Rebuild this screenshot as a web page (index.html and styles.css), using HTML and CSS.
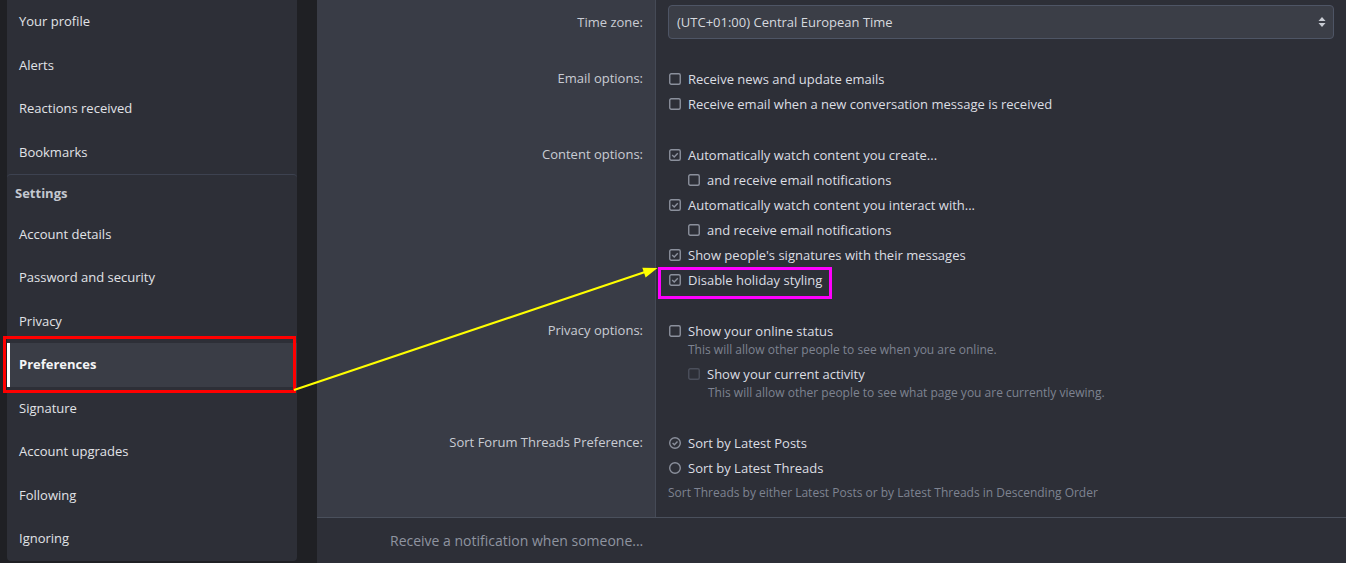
FILE: index.html
```html
<!DOCTYPE html>
<html lang="en">
<head>
<meta charset="utf-8">
<title>Preferences</title>
<link rel="stylesheet" href="styles.css">
</head>
<body>
<div class="page">
  <nav class="sidebar">
    <div class="block">
      <a class="nav-item">Your profile</a>
      <a class="nav-item">Alerts</a>
      <a class="nav-item">Reactions received</a>
      <a class="nav-item">Bookmarks</a>
    </div>
    <div class="block block-sep">
      <div class="block-header">Settings</div>
      <a class="nav-item">Account details</a>
      <a class="nav-item">Password and security</a>
      <a class="nav-item">Privacy</a>
      <a class="nav-item is-active">Preferences</a>
      <a class="nav-item">Signature</a>
      <a class="nav-item">Account upgrades</a>
      <a class="nav-item">Following</a>
      <a class="nav-item">Ignoring</a>
    </div>
  </nav>

  <main class="main">
    <div class="form">
      <div class="row row-first">
        <div class="label">Time zone:</div>
        <div class="control">
          <div class="select">
            <span>(UTC+01:00) Central European Time</span>
            <svg class="select-arrow" width="8" height="12" viewBox="0 0 8 12"><path d="M4 1 L7.5 5 H0.5 Z M4 11 L7.5 7 H0.5 Z" fill="#c9ccd4"/></svg>
          </div>
        </div>
      </div>

      <div class="row">
        <div class="label"><span class="label-text">Email options:</span></div>
        <div class="control">
          <div class="opt"><svg class="cb" width="12" height="12" viewBox="0 0 12 12"><rect x="0.75" y="0.75" width="10.5" height="10.5" rx="1.5"/></svg>Receive news and update emails</div>
          <div class="opt"><svg class="cb" width="12" height="12" viewBox="0 0 12 12"><rect x="0.75" y="0.75" width="10.5" height="10.5" rx="1.5"/></svg>Receive email when a new conversation message is received</div>
        </div>
      </div>

      <div class="row">
        <div class="label"><span class="label-text">Content options:</span></div>
        <div class="control">
          <div class="opt"><svg class="cb" width="12" height="12" viewBox="0 0 12 12"><rect x="0.75" y="0.75" width="10.5" height="10.5" rx="1.5"/><path d="M3.2 6.1 L5.2 8 L8.8 4.2"/></svg>Automatically watch content you create...</div>
          <div class="opt opt-sub"><svg class="cb" width="12" height="12" viewBox="0 0 12 12"><rect x="0.75" y="0.75" width="10.5" height="10.5" rx="1.5"/></svg>and receive email notifications</div>
          <div class="opt"><svg class="cb" width="12" height="12" viewBox="0 0 12 12"><rect x="0.75" y="0.75" width="10.5" height="10.5" rx="1.5"/><path d="M3.2 6.1 L5.2 8 L8.8 4.2"/></svg>Automatically watch content you interact with...</div>
          <div class="opt opt-sub"><svg class="cb" width="12" height="12" viewBox="0 0 12 12"><rect x="0.75" y="0.75" width="10.5" height="10.5" rx="1.5"/></svg>and receive email notifications</div>
          <div class="opt"><svg class="cb" width="12" height="12" viewBox="0 0 12 12"><rect x="0.75" y="0.75" width="10.5" height="10.5" rx="1.5"/><path d="M3.2 6.1 L5.2 8 L8.8 4.2"/></svg>Show people's signatures with their messages</div>
          <div class="opt"><svg class="cb" width="12" height="12" viewBox="0 0 12 12"><rect x="0.75" y="0.75" width="10.5" height="10.5" rx="1.5"/><path d="M3.2 6.1 L5.2 8 L8.8 4.2"/></svg>Disable holiday styling</div>
        </div>
      </div>

      <div class="row">
        <div class="label"><span class="label-text">Privacy options:</span></div>
        <div class="control">
          <div class="opt"><svg class="cb" width="12" height="12" viewBox="0 0 12 12"><rect x="0.75" y="0.75" width="10.5" height="10.5" rx="1.5"/></svg>Show your online status</div>
          <div class="hint">This will allow other people to see when you are online.</div>
          <div class="opt opt-sub"><svg class="cb cb-disabled" width="12" height="12" viewBox="0 0 12 12"><rect x="0.75" y="0.75" width="10.5" height="10.5" rx="1.5"/></svg>Show your current activity</div>
          <div class="hint hint-sub">This will allow other people to see what page you are currently viewing.</div>
        </div>
      </div>

      <div class="row row-sort">
        <div class="label"><span class="label-text">Sort Forum Threads Preference:</span></div>
        <div class="control">
          <div class="opt"><svg class="cb" width="12" height="12" viewBox="0 0 12 12"><circle cx="6" cy="6" r="5.3"/><path d="M3.6 6.1 L5.4 7.8 L8.5 4.5"/></svg>Sort by Latest Posts</div>
          <div class="opt"><svg class="cb" width="12" height="12" viewBox="0 0 12 12"><circle cx="6" cy="6" r="5.3"/></svg>Sort by Latest Threads</div>
          <div class="hint hint-sort">Sort Threads by either Latest Posts or by Latest Threads in Descending Order</div>
        </div>
      </div>
    </div>
    <div class="section-head">Receive a notification when someone...</div>
  </main>
</div>

<div class="mark mark-red"></div>
<div class="mark mark-magenta"></div>
<svg class="arrow" width="1346" height="563" viewBox="0 0 1346 563">
  <line x1="294" y1="390" x2="645" y2="272" stroke="#ffff00" stroke-width="2.2"/>
  <polygon points="657.5,268 645.6,277.6 642.3,267.8" fill="#ffff00"/>
</svg>
</body>
</html>
```

FILE: styles.css
```css
html, body {
  margin: 0;
  padding: 0;
}
body {
  background: #1f2024;
  font-family: "Open Sans", "Noto Sans", "DejaVu Sans", sans-serif;
  font-size: 13px;
  color: #dfe1e5;
  width: 1346px;
  height: 563px;
  overflow: hidden;
  position: relative;
}
.page {
  display: flex;
  align-items: flex-start;
  padding-left: 7px;
  gap: 20px;
}

/* Sidebar */
.sidebar {
  width: 290px;
  flex: none;
  background: #2d2f37;
  border-radius: 0 0 4px 4px;
  display: flex;
  flex-direction: column;
}
.block {
  display: flex;
  flex-direction: column;
}
.block-sep {
  border-top: 1px solid #3d4250;
  border-radius: 4px 4px 0 0;
}
.block-header {
  padding: 9px 8px 9px 8px;
  line-height: 19.5px;
  font-weight: 700;
  color: #c4c8d0;
}
.nav-item {
  display: block;
  padding: 12px 12px;
  line-height: 19.5px;
  color: #e1e3e7;
  text-decoration: none;
}
.nav-item.is-active {
  background: #3a3d46;
  font-weight: 700;
  color: #f3f4f6;
  border-left: 3px solid #ffffff;
  padding-left: 9px;
}

/* Main */
.main {
  flex: 1;
  display: flex;
  flex-direction: column;
  min-width: 0;
}
.form {
  display: flex;
  flex-direction: column;
}
.row {
  display: flex;
}
.label {
  width: 339px;
  flex: none;
  box-sizing: border-box;
  background: #393c46;
  border-right: 1px solid #454a56;
  text-align: right;
  padding: 13px 12px 13px 0;
  color: #c9ccd4;
}
.label-text {
  display: block;
  line-height: 25px;
}
.control {
  flex: 1;
  background: #2d2f37;
  padding: 13px 12px 13px 12px;
}
.row-first .label,
.row-first .control {
  padding-top: 5px;
}
.row-first .control {
  padding-bottom: 14px;
}
.row-first .label {
  line-height: 34px;
}
.select {
  height: 34px;
  box-sizing: border-box;
  background: #3b3e47;
  border: 1px solid #4e5565;
  border-radius: 4px;
  display: flex;
  align-items: center;
  justify-content: space-between;
  padding: 0 7px 0 8px;
  color: #d6d9df;
}
.select-arrow {
  display: block;
}

.opt {
  display: flex;
  align-items: center;
  gap: 7px;
  height: 25px;
  padding-left: 1px;
  color: #dcdee3;
}
.opt-sub {
  padding-left: 20px;
}
.cb {
  flex: none;
  fill: none;
  stroke: #8b909c;
  stroke-width: 1.4;
}
.cb-disabled {
  stroke: #4b4f5b;
}
.hint {
  font-size: 12px;
  line-height: 14px;
  color: #7e8391;
  padding-left: 20px;
  margin-bottom: 4px;
}
.hint-sub {
  padding-left: 40px;
}

/* Sort */
.row-sort .label,
.row-sort .control {
  padding-bottom: 16px;
}
.hint-sort {
  padding-left: 0;
  margin-top: 5px;
  margin-bottom: 0;
  line-height: 16px;
}

.section-head {
  border-top: 1px solid #4a505c;
  background: #2d2f37;
  padding: 13px 0 20px 73px;
  font-size: 14px;
  line-height: 20px;
  color: #8f94a0;
}

/* Annotations */
.mark {
  position: absolute;
  box-sizing: border-box;
  pointer-events: none;
}
.mark-red {
  left: 3px;
  top: 336px;
  width: 293px;
  height: 57px;
  border: 3px solid #ff0000;
}
.mark-magenta {
  left: 658px;
  top: 267px;
  width: 174px;
  height: 32px;
  border: 3px solid #ff00ff;
}
.arrow {
  position: absolute;
  left: 0;
  top: 0;
  pointer-events: none;
}
```
